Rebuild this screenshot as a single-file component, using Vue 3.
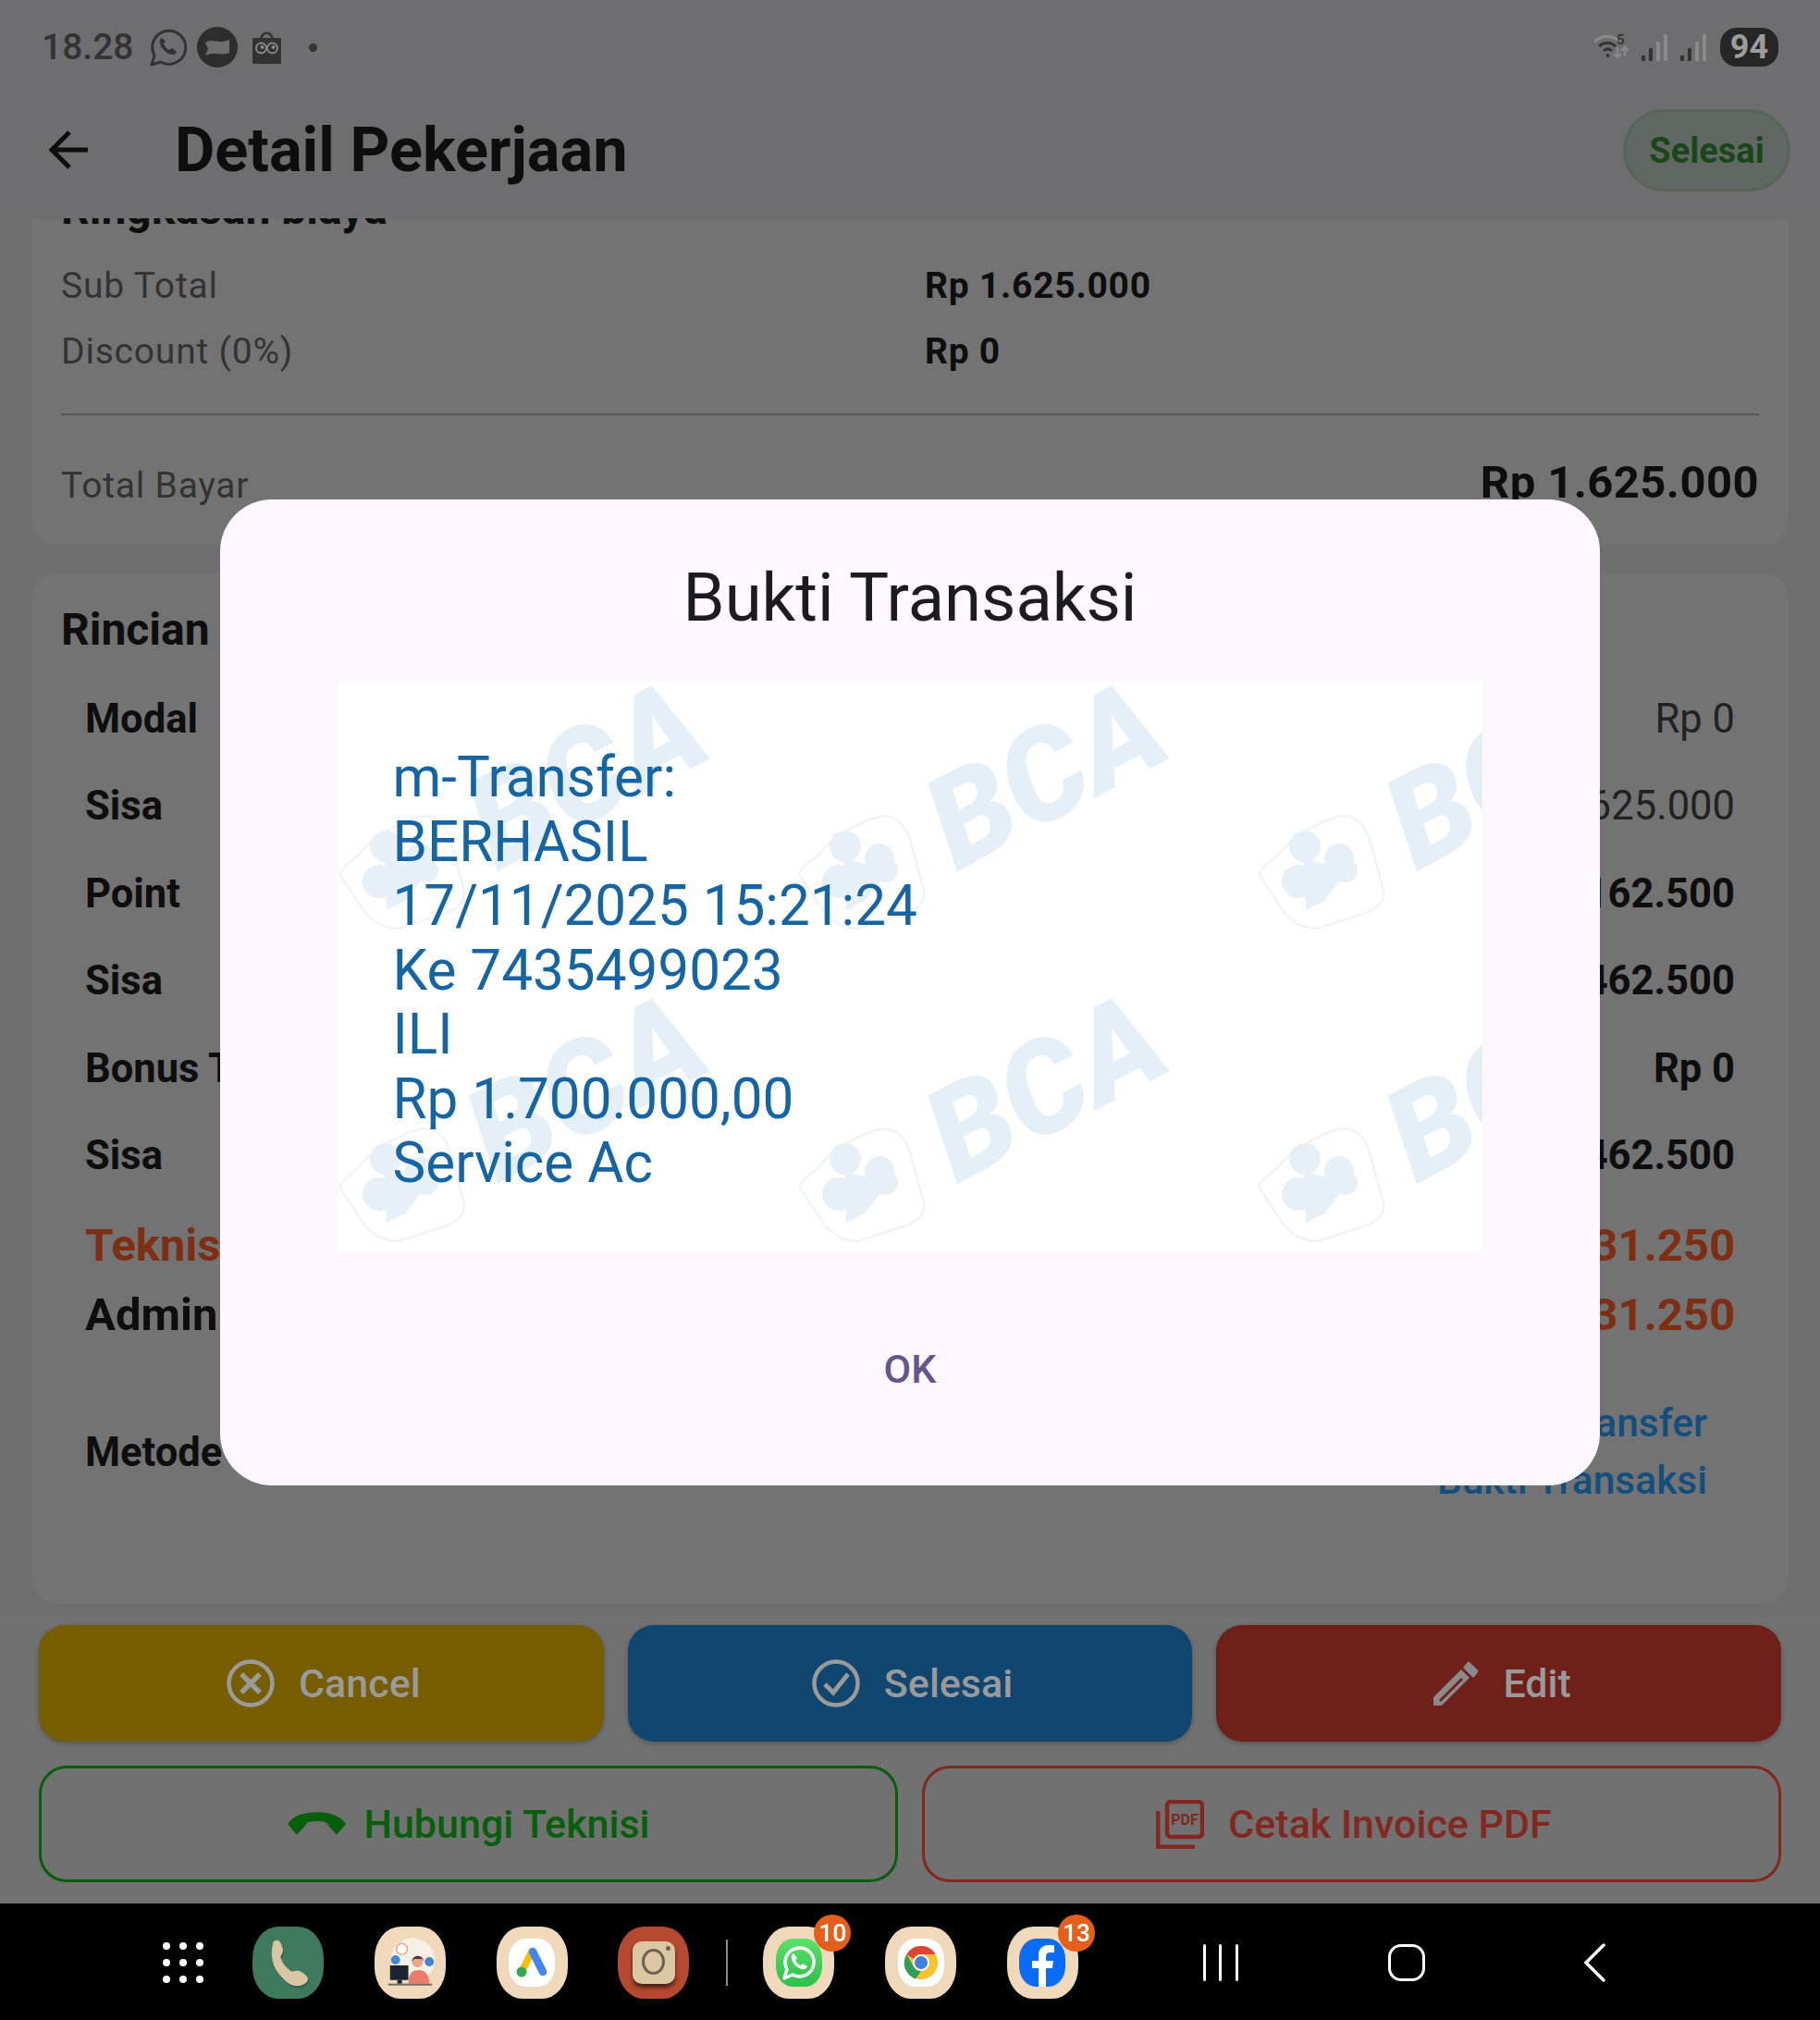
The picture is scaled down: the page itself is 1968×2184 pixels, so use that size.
<script setup>
const costRows = [
  { label: 'Sub Total', value: 'Rp 1.625.000' },
  { label: 'Discount (0%)', value: 'Rp 0' },
];

const detailRows = [
  { label: 'Modal', value: 'Rp 0', light: true },
  { label: 'Sisa', value: 'Rp 1.625.000', light: true },
  { label: 'Point', value: 'Rp 162.500' },
  { label: 'Sisa', value: 'Rp 1.462.500' },
  { label: 'Bonus Teknisi', value: 'Rp 0' },
  { label: 'Sisa', value: 'Rp 1.462.500' },
];

const receiptLines = [
  'm-Transfer:',
  'BERHASIL',
  '17/11/2025 15:21:24',
  'Ke 7435499023',
  'ILI',
  'Rp 1.700.000,00',
  'Service Ac',
];

const watermarks = [1, 2, 3, 4, 5, 6];
</script>

<template>
  <div class="screen">
    <div class="status-bar">
      <span class="clock">18.28</span>
      <svg class="st-wa" viewBox="0 0 40 42" fill="none">
        <path d="M2 40l3-10a18 18 0 1 1 7 7z" stroke="#333" stroke-width="3" stroke-linejoin="round" />
        <path d="M13 11c-2 1-3 3-2 6 2 6 6 10 12 12 3 1 5-1 6-3l-5-4-3 2c-3-1-5-4-6-7l2-2z" fill="#333" />
      </svg>
      <svg class="st-msg" viewBox="0 0 44 44">
        <circle cx="22" cy="22" r="22" fill="#2d2d2d" />
        <path d="M9 17c8-5 15 2 26-3v14c-9 4-17-2-26 3l3-7z" fill="#6e6e70" />
      </svg>
      <svg class="st-bag" viewBox="0 0 31 35" fill="none">
        <path d="M9 10c0-11 13-11 13 0" stroke="#333" stroke-width="2.500" />
        <rect x="0" y="7" width="31" height="28" rx="1" fill="#333" />
        <circle cx="9.500" cy="18" r="5.500" stroke="#8a8a8a" stroke-width="1.800" />
        <circle cx="21.500" cy="18" r="5.500" stroke="#8a8a8a" stroke-width="1.800" />
        <circle cx="10.500" cy="17" r="2" fill="#8a8a8a" />
        <circle cx="22.500" cy="17" r="2" fill="#8a8a8a" />
      </svg>
      <span class="st-dot"></span>

      <div class="status-right">
        <svg class="st-wifi" viewBox="0 0 40 28" fill="none">
          <path d="M1 8c8-7 18-7 25-2" stroke="#8a8a8a" stroke-width="3" />
          <path d="M6 13c6-5 12-5 18 0" stroke="#333" stroke-width="3" />
          <path d="M11 18c3-3 6-3 9 0" stroke="#333" stroke-width="3" />
          <circle cx="15.500" cy="23" r="2" fill="#333" />
          <path d="M26 14v11m-4-4l4 4 4-4" stroke="#888" stroke-width="2.500" />
          <path d="M34 24V14m-4 4l4-4 4 4" stroke="#888" stroke-width="2.500" />
        </svg>
        <span class="st-five">5</span>
        <svg v-for="n in 2" :key="n" class="st-signal" viewBox="0 0 28 29">
          <rect x="0" y="23" width="4" height="6" rx="1" fill="#333" />
          <rect x="8" y="15" width="4" height="14" rx="1" fill="#333" />
          <rect x="16" y="8" width="4" height="21" rx="1" fill="#8a8a8a" />
          <rect x="24" y="0" width="4" height="29" rx="1" fill="#8a8a8a" />
        </svg>
        <span class="battery">94</span>
      </div>
    </div>

    <div class="app-bar">
      <svg class="back" viewBox="0 0 42 42" fill="none">
        <path d="M42 21H4M22 2L3 21l19 19" stroke="#0e0e0e" stroke-width="5" />
      </svg>
      <h1 class="title">Detail Pekerjaan</h1>
      <span class="done-pill">Selesai</span>
    </div>

    <div class="scroll-area">
      <div class="scroll-inner">
        <section class="card summary">
          <h2 class="card-title">Ringkasan biaya</h2>
          <div v-for="row in costRows" :key="row.label" class="cost-row">
            <span class="cost-label">{{ row.label }}</span>
            <span class="cost-value">{{ row.value }}</span>
          </div>
          <div class="divider"></div>
          <div class="total-row">
            <span class="cost-label">Total Bayar</span>
            <span class="total-value">Rp 1.625.000</span>
          </div>
        </section>

        <section class="card details">
          <h2 class="card-title">Rincian Pembayaran</h2>
          <div v-for="(row, i) in detailRows" :key="i" class="detail-row">
            <span class="detail-label">{{ row.label }}</span>
            <span class="detail-value" :class="{ light: row.light }">{{ row.value }}</span>
          </div>
          <div class="share-row first">
            <span class="share-label tech">Teknisi</span>
            <span class="share-value">Rp 731.250</span>
          </div>
          <div class="share-row">
            <span class="share-label">Admin</span>
            <span class="share-value">Rp 731.250</span>
          </div>
          <div class="method-row">
            <span class="detail-label">Metode Pembayaran</span>
            <span class="method-value">Transfer<br />Bukti Transaksi</span>
          </div>
        </section>
      </div>
    </div>

    <div class="actions">
      <div class="action-row">
        <button class="solid amber">
          <svg class="btn-icon" viewBox="0 0 52 52" fill="none">
            <circle cx="26" cy="26" r="23.500" stroke="#9a9a9a" stroke-width="4.500" />
            <path d="M16 16l20 20M36 16L16 36" stroke="#9a9a9a" stroke-width="5.500" />
          </svg>
          Cancel
        </button>
        <button class="solid blue">
          <svg class="btn-icon" viewBox="0 0 52 52" fill="none">
            <circle cx="26" cy="26" r="23.500" stroke="#9a9a9a" stroke-width="4.500" />
            <path d="M14 27l9 9 16-20" stroke="#9a9a9a" stroke-width="5" />
          </svg>
          Selesai
        </button>
        <button class="solid red">
          <svg class="btn-icon" viewBox="8 9 52 52">
            <path fill="#8a8a8a" fill-rule="evenodd" d="M11 50l30-30 9 9-30 30h-9zM17 53l2 2 24-24-2-2z" />
            <path fill="#8a8a8a" stroke="#8a8a8a" stroke-width="3" stroke-linejoin="round" d="M49 13l9 9-4 5-9-9z" />
          </svg>
          Edit
        </button>
      </div>
      <div class="action-row two">
        <button class="outline green">
          <svg class="hang-icon" viewBox="0 0 64 26">
            <path fill="#075e0b" d="M0 13C6 4 18 0 32 0s26 4 32 13L54 25 44 14c0-3-5-4-12-4s-12 1-12 4L10 25z" />
          </svg>
          Hubungi Teknisi
        </button>
        <button class="outline rust">
          <svg class="pdf-icon" viewBox="0 0 52 53" fill="none">
            <rect x="12" y="2" width="38" height="38" rx="4" stroke="#822820" stroke-width="4.500" />
            <path d="M2 12v39h40" stroke="#822820" stroke-width="5" />
            <text x="31" y="27" text-anchor="middle" class="pdf-text">PDF</text>
          </svg>
          Cetak Invoice PDF
        </button>
      </div>
    </div>

    <nav class="nav-bar">
      <div class="apps-grid">
        <span v-for="n in 9" :key="n" class="apps-dot"></span>
      </div>

      <div class="app phone">
        <svg viewBox="0 0 78 78">
          <path fill="#1d3f2f" opacity="0.5" d="M24 18c5-4 8 0 10 7 2 5-3 8-2 11 2 6 6 11 11 14 3 2 7-2 11 1 7 4 10 8 6 12-9 7-19 3-26-5-9-9-15-22-10-40z" />
          <path fill="#d8c6a2" d="M23 16c5-4 8 0 10 7 2 5-3 8-2 11 2 6 6 11 11 14 3 2 7-2 11 1 7 4 10 8 6 12-9 7-19 3-26-5-9-9-15-22-10-40z" />
        </svg>
      </div>

      <div class="app beige">
        <svg viewBox="0 0 78 78">
          <circle cx="42" cy="36" r="24" fill="#f6efe5" />
          <circle cx="30" cy="24" r="6" fill="#fff" stroke="#e3a88a" stroke-width="1.500" />
          <circle cx="23" cy="36" r="5" fill="#3f88d0" />
          <circle cx="60" cy="38" r="5" fill="#3f88d0" />
          <rect x="17" y="42" width="20" height="16" fill="#1b2430" />
          <rect x="25" y="58" width="5" height="4" fill="#1b2430" />
          <path d="M37 62c0-9 3-15 11-15s12 6 12 15z" fill="#ec7b6c" />
          <circle cx="47" cy="38" r="6" fill="#e9a58f" />
          <path d="M41 38c0-8 12-9 13 0l-2-3h-9z" fill="#54304a" />
          <rect x="15" y="62" width="48" height="2" fill="#6f6a60" />
        </svg>
      </div>

      <div class="app beige">
        <div class="inner white">
          <svg viewBox="0 0 50 52">
            <path d="M25 14L14 36" stroke="#fbbc04" stroke-width="7.500" stroke-linecap="round" />
            <path d="M26 14l11 22" stroke="#4285f4" stroke-width="8.500" stroke-linecap="round" />
            <circle cx="14" cy="36" r="5.500" fill="#34a853" />
          </svg>
        </div>
      </div>

      <div class="app rust-app">
        <div class="camera">
          <span class="lens"></span>
          <span class="flash"></span>
        </div>
      </div>

      <span class="dock-divider"></span>

      <div class="app beige wa-app">
        <div class="inner wa-green">
          <svg viewBox="0 0 48 52" fill="none">
            <path d="M8 43l3-10a15.500 15.500 0 1 1 6 6z" stroke="#fff" stroke-width="3.500" stroke-linejoin="round" />
            <path d="M18 16c-2 1-3 3-2 6 2 6 5 9 11 11 3 1 5-1 6-3l-5-3-2 2c-3-1-5-3-6-6l2-2z" fill="#fff" />
          </svg>
        </div>
        <span class="badge">10</span>
      </div>

      <div class="app beige chrome-app">
        <div class="inner white">
          <svg viewBox="0 0 50 52">
            <circle cx="25" cy="26" r="18" fill="#fbc02d" />
            <path d="M25 8a18 18 0 0 1 15.600 9H25a9 9 0 0 0-8 5L9.400 17A18 18 0 0 1 25 8z" fill="#db4437" />
            <path d="M9.400 17L17 30.500a9 9 0 0 0 8 4.500l-6 8.500A18 18 0 0 1 9.400 17z" fill="#2f9e57" />
            <circle cx="25" cy="26" r="9" fill="#fff" />
            <circle cx="25" cy="26" r="7" fill="#3f83d8" />
          </svg>
        </div>
      </div>

      <div class="app beige fb-app">
        <div class="inner fb-blue">
          <svg viewBox="0 0 50 52">
            <path fill="#fff" d="M21 52V32h-7v-8h7v-6c0-7 4-11 11-11 3 0 5 .3 6 .5V15h-4c-3 0-5 1-5 5v4h8l-1 8h-7v20z" />
          </svg>
        </div>
        <span class="badge">13</span>
      </div>

      <div class="sys-buttons">
        <span class="recents"><i></i><i></i><i></i></span>
        <span class="home"></span>
        <svg class="sys-back" viewBox="0 0 24 42" fill="none">
          <path d="M22 2L3 21l19 19" stroke="#fff" stroke-width="3.500" stroke-linecap="round" />
        </svg>
      </div>
    </nav>

    <div class="dialog">
      <h2 class="dialog-title">Bukti Transaksi</h2>
      <div class="receipt">
        <div class="watermarks">
          <div v-for="n in watermarks" :key="n" class="mark">
            <svg class="mark-shield" viewBox="0 0 140 128" fill="#e8f0f7">
              <path d="M25 45C40 25 75 8 90 5c15-3 28 7 33 25l15 55c2 15-13 23-28 27l-40 13c-15 3-30-5-40-17L5 70c-5-8 10-15 20-25z" fill="none" stroke="#f0f4f8" stroke-width="2.500" />
              <circle cx="53" cy="37" r="17" />
              <circle cx="90" cy="50" r="16" />
              <circle cx="46" cy="75" r="18" />
              <circle cx="97" cy="63" r="13" />
              <path d="M52 50l22 6 20 14-20 26-20 10z" />
            </svg>
            <span class="mark-text">BCA</span>
          </div>
        </div>
        <div class="receipt-text">
          <div v-for="line in receiptLines" :key="line" class="receipt-line">{{ line }}</div>
        </div>
      </div>
      <div class="dialog-action">OK</div>
    </div>
  </div>
</template>

<style>
html,
body {
  margin: 0;
  background: #6f6f6f;
}
</style>

<style scoped>
.screen {
  position: relative;
  width: 1968px;
  height: 2184px;
  display: flex;
  flex-direction: column;
  overflow: hidden;
  background: #6f6f6f;
  font-family: Roboto, "Liberation Sans", sans-serif;
  color: #0e0e0e;
}

.status-bar {
  height: 102px;
  flex: none;
  box-sizing: border-box;
  display: flex;
  align-items: center;
  padding: 0 45px 0 45px;
  background: #6e6e70;
}

.clock {
  font-size: 39px;
  font-weight: 500;
  color: #333;
  width: 117px;
}

.st-wa {
  width: 40px;
  height: 42px;
}

.st-msg {
  width: 44px;
  height: 44px;
  margin-left: 11px;
}

.st-bag {
  width: 31px;
  height: 35px;
  margin-left: 16px;
}

.st-dot {
  width: 9px;
  height: 9px;
  border-radius: 50%;
  background: #333;
  margin-left: 30px;
}

.status-right {
  position: relative;
  margin-left: auto;
  display: flex;
  align-items: center;
}

.st-wifi {
  width: 40px;
  height: 28px;
}

.st-five {
  position: absolute;
  left: 25px;
  top: 4px;
  font-size: 15px;
  font-weight: 500;
  color: #333;
}

.st-signal {
  width: 28px;
  height: 29px;
  margin-left: 12px;
}

.st-signal + .st-signal {
  margin-left: 14px;
}

.battery {
  width: 63px;
  height: 42px;
  margin-left: 15px;
  border-radius: 18px;
  background: #262626;
  color: #9c9c9c;
  font-size: 36px;
  font-weight: 700;
  line-height: 42px;
  text-align: center;
}

.app-bar {
  height: 134px;
  flex: none;
  box-sizing: border-box;
  display: flex;
  align-items: center;
  padding: 0 32px 14px 53px;
  background: #6e6e70;
}

.back {
  width: 42px;
  height: 42px;
}

.title {
  margin: 0 0 0 94px;
  font-size: 66.700px;
  font-weight: 700;
  line-height: 1;
}

.done-pill {
  margin-left: auto;
  width: 181px;
  height: 89px;
  box-sizing: border-box;
  border: 3px solid #586558;
  border-radius: 45px;
  background: #616864;
  color: #1a4719;
  font-size: 38px;
  font-weight: 700;
  line-height: 84px;
  text-align: center;
}

.scroll-area {
  flex: 1;
  min-height: 0;
  overflow: hidden;
  padding: 0 34px;
}

.scroll-inner {
  margin-top: -71px;
  display: flex;
  flex-direction: column;
  gap: 31px;
}

.card {
  background: #737373;
  border-radius: 28px;
  padding: 34px 32px 16px;
}

.card-title {
  margin: 0;
  font-size: 48px;
  font-weight: 700;
  line-height: 54px;
}

.summary .card-title {
  margin-bottom: 20px;
}

.cost-row {
  height: 71px;
  display: flex;
  align-items: center;
}

.cost-label {
  width: 934px;
  font-size: 39px;
  letter-spacing: 0.800px;
  color: #333;
}

.cost-value {
  font-size: 39px;
  font-weight: 700;
  letter-spacing: 0.750px;
}

.divider {
  height: 2px;
  margin-top: 32px;
  background: #585858;
}

.total-row {
  height: 100px;
  box-sizing: border-box;
  margin-top: 24px;
  padding-top: 20px;
  display: flex;
  align-items: baseline;
  justify-content: space-between;
}

.total-row .cost-label {
  width: auto;
}

.total-value {
  font-size: 49px;
  font-weight: 700;
  letter-spacing: 0.400px;
}

.details {
  padding-bottom: 102px;
}

.details .card-title {
  margin-bottom: 22px;
}

.detail-row {
  height: 94.500px;
  display: flex;
  align-items: center;
  justify-content: space-between;
  padding: 0 26px;
}

.detail-label {
  font-size: 43.500px;
  font-weight: 700;
}

.detail-value {
  font-size: 43.500px;
  font-weight: 700;
}

.detail-value.light {
  font-weight: 400;
  color: #222;
}

.share-row {
  height: 75px;
  display: flex;
  align-items: center;
  justify-content: space-between;
  padding: 0 26px;
}

.share-row.first {
  margin-top: 12px;
}

.share-label {
  font-size: 49px;
  font-weight: 700;
}

.share-label.tech,
.share-value {
  color: #7e2e12;
}

.share-value {
  font-size: 49px;
  font-weight: 700;
}

.method-row {
  margin-top: 49px;
  display: flex;
  align-items: center;
  justify-content: space-between;
  padding: 0 56px 0 26px;
}

.method-value {
  color: #124f7e;
  font-size: 42.500px;
  font-weight: 500;
  line-height: 62px;
  text-align: right;
}

.actions {
  height: 313px;
  flex: none;
  box-sizing: border-box;
  padding: 12px 42px 23px;
  display: flex;
  flex-direction: column;
  gap: 26px;
  background: #717171;
}

.action-row {
  height: 126px;
  display: grid;
  grid-template-columns: repeat(3, 1fr);
  gap: 26px;
}

.action-row.two {
  grid-template-columns: repeat(2, 1fr);
}

button {
  display: flex;
  align-items: center;
  justify-content: center;
  border: 0;
  font-family: inherit;
  font-size: 43px;
  font-weight: 500;
  padding: 0;
}

.solid {
  border-radius: 28px;
  color: #9a9a9a;
  gap: 26px;
  padding-left: 5px;
  box-shadow: 0 2px 5px rgb(0 0 0 / 25%);
}

.amber {
  background: #765d00;
}

.blue {
  background: #10466f;
}

.red {
  background: #6f2018;
}

.outline {
  box-sizing: border-box;
  border-radius: 30px;
  background: transparent;
  border: 3px solid;
}

.green {
  color: #075e0b;
  border-color: #075e0b;
  gap: 19px;
  padding-left: 1px;
}

.rust {
  color: #822820;
  border-color: #822820;
  gap: 26px;
  padding-left: 5px;
}

.btn-icon {
  width: 52px;
  height: 52px;
}

.hang-icon {
  width: 63px;
  height: 26px;
}

.pdf-icon {
  width: 52px;
  height: 53px;
}

.pdf-text {
  font-size: 16px;
  font-weight: 700;
  fill: #822820;
}

.nav-bar {
  height: 126px;
  flex: none;
  display: flex;
  align-items: center;
  background: #000;
  padding: 25px 0 23px 176px;
  box-sizing: border-box;
}

.apps-grid {
  display: grid;
  grid-template-columns: repeat(3, 8px);
  gap: 10px;
  margin-right: 53px;
}

.apps-dot {
  width: 8px;
  height: 8px;
  border-radius: 50%;
  background: #fff;
}

.app {
  position: relative;
  width: 77px;
  height: 78px;
  border-radius: 28px / 34px;
  display: flex;
  align-items: center;
  justify-content: center;
  margin-right: 54.800px;
  flex: none;
}

.app svg {
  display: block;
  width: 100%;
  height: 100%;
}

.phone {
  background: #3f7a5f;
}

.beige {
  background: #efd9ba;
}

.rust-app {
  background: #b64a30;
  margin-right: 40px;
}

.inner {
  width: 50px;
  height: 52px;
  border-radius: 18px / 22px;
  overflow: hidden;
}

.white {
  background: #fff;
}

.wa-green {
  background: linear-gradient(#5ae06a, #2cc04a);
}

.fb-blue {
  background: #0a6cf5;
}

.camera {
  position: relative;
  width: 46px;
  height: 46px;
  border-radius: 10px;
  background: #dcc7a4;
  box-shadow: 0 4px 4px #4a2114;
}

.lens {
  position: absolute;
  left: 10px;
  top: 8px;
  width: 25px;
  height: 28px;
  box-sizing: border-box;
  border: 3px solid #6e6252;
  border-radius: 50%;
}

.flash {
  position: absolute;
  right: 5px;
  top: 5px;
  width: 5px;
  height: 5px;
  border-radius: 50%;
  background: #6e6252;
}

.dock-divider {
  width: 2px;
  height: 50px;
  background: #8a8a8a;
  margin-right: 38px;
  flex: none;
}

.badge {
  position: absolute;
  right: -18px;
  top: -13px;
  width: 40px;
  height: 40px;
  border-radius: 50%;
  background: #e35f1a;
  color: #fff;
  font-size: 26px;
  font-weight: 500;
  line-height: 40px;
  text-align: center;
}

.sys-buttons {
  display: flex;
  align-items: center;
  margin-left: 80px;
  height: 40px;
}

.recents {
  width: 38px;
  height: 40px;
  display: flex;
  justify-content: space-between;
}

.recents i {
  width: 3px;
  height: 40px;
  background: #fff;
  border-radius: 2px;
}

.home {
  width: 40px;
  height: 40px;
  box-sizing: border-box;
  border: 3px solid #fff;
  border-radius: 14px;
  margin-left: 162px;
}

.sys-back {
  width: 24px;
  height: 42px;
  margin-left: 171px;
}

.dialog {
  position: absolute;
  left: 238px;
  top: 540px;
  width: 1492px;
  height: 1066px;
  box-sizing: border-box;
  padding-top: 62px;
  border-radius: 56px;
  background: #fef7ff;
  display: flex;
  flex-direction: column;
  align-items: center;
}

.dialog-title {
  margin: 0;
  height: 135px;
  font-size: 72.400px;
  font-weight: 400;
  line-height: 90px;
  color: #1d1b20;
}

.receipt {
  position: relative;
  width: 1237px;
  height: 616px;
  overflow: hidden;
  background: #fff;
}

.watermarks {
  position: absolute;
  inset: 0;
  display: grid;
  grid-template-columns: repeat(3, 497px);
  grid-auto-rows: 338px;
}

.mark {
  position: relative;
}

.mark-shield {
  position: absolute;
  left: -2px;
  top: 141px;
  width: 140px;
  height: 128px;
}

.mark-text {
  position: absolute;
  left: 134px;
  top: 28px;
  font-size: 139px;
  font-weight: 900;
  font-style: italic;
  line-height: 146px;
  color: #e4eff8;
  transform: rotate(-28deg);
}

.receipt-text {
  position: relative;
  padding: 69px 0 0 59px;
}

.receipt-line {
  font-size: 60.200px;
  line-height: 69.500px;
  color: #1565a5;
}

.dialog-action {
  margin-top: 91px;
  font-size: 43px;
  font-weight: 500;
  color: #65558f;
  line-height: 72px;
}
</style>
